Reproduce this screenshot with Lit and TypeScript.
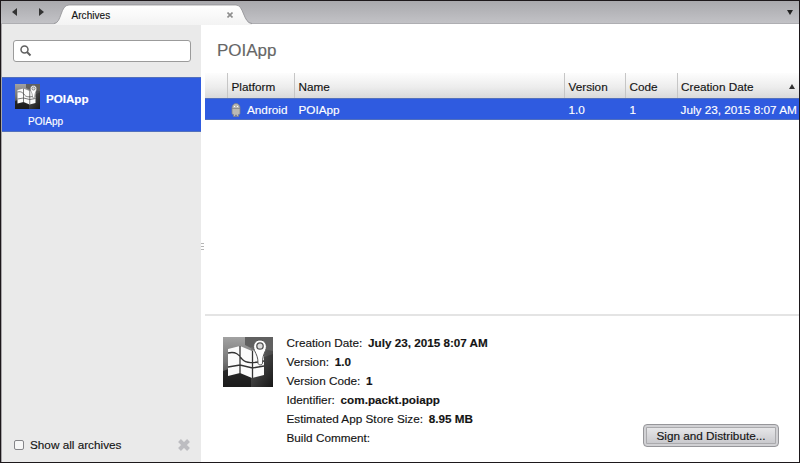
import { LitElement, html, css } from "lit";
import { customElement, property } from "lit/decorators.js";

@customElement("map-icon")
class MapIcon extends LitElement {
  @property({ type: Number }) size = 50;
  static styles = css`
    :host { display: block; flex: none; }
    svg { display: block; }
  `;
  render() {
    return html`<svg width=${this.size} height=${this.size} viewBox="0 0 50 50">
      <defs>
        <linearGradient id="g" x1="0" y1="0" x2="0" y2="1">
          <stop offset="0" stop-color="#a2a2a2" /><stop offset=".5" stop-color="#747474" />
          <stop offset="1" stop-color="#2b2b2b" />
        </linearGradient>
        <linearGradient id="d" x1="0" y1="0" x2="1" y2="1">
          <stop offset="0" stop-color="#777" /><stop offset="1" stop-color="#151515" />
        </linearGradient>
      </defs>
      <rect width="50" height="50" fill="url(#g)" />
      <path d="M22 0H50V22L22 8Z" fill="#606060" />
      <path d="M0 34L50 17V50H0Z" fill="#171717" opacity=".75" />
      <path d="M28 10L50 14V50H28Z" fill="url(#d)" opacity=".7" />
      <path d="M5 12L17 9L29 14L41 11V38L29 41L17 36L5 39Z" fill="#fbfbfb" />
      <path d="M17 9V37M29.500 14V41M5 16C13 14 16 18 19 22C23 27 31 26 41 24M5 30L17 28L29.500 31L41 29" fill="none" stroke="#333" stroke-width="1.300" />
      <path d="M35 26C35 20 33.500 18 31.500 13.500C29 8 32 3 37 3S45 8 42.500 13.500C40.500 18 39.500 20 39.500 26C39.500 28.500 35 28.500 35 26Z" fill="#fff" stroke="#555" stroke-width="1" />
      <circle cx="37" cy="9" r="3.200" fill="#ddd" stroke="#555" stroke-width="1.300" />
    </svg>`;
  }
}

@customElement("app-root")
class AppRoot extends LitElement {
  static styles = css`
    * { box-sizing: border-box; }
    :host {
      display: flex; flex-direction: column; box-sizing: border-box; width: 800px; height: 463px; overflow: hidden;
      border: 1px solid #1d181b; background: #fff; color: #141414;
      font: 11.75px/19px "Liberation Sans", Arial, sans-serif; white-space: nowrap;
      -webkit-text-stroke: .15px currentColor;
    }
    svg { display: block; flex: none; }
    .tabs {
      height: 23px; flex: none; display: flex; align-items: center; padding: 0 6px 0 11px;
      background: linear-gradient(#a9a9ad, #c2c2c6); border-bottom: 1px solid #aeaeb2;
    }
    .next { margin-left: 22px; }
    .tab { position: relative; width: 196px; height: 23px; margin-left: 10px; align-self: flex-start; }
    .shape { position: absolute; left: 0; top: 0; }
    .label { position: relative; display: flex; align-items: center; height: 20px; padding: 0 17px 0 17.5px; margin-top: 4px; font-size: 10px; letter-spacing: .05px; }
    .label svg { margin-left: auto; }
    .fill { flex: 1; }
    .body { flex: 1; display: flex; min-height: 0; }
    .side { width: 200px; flex: none; display: flex; flex-direction: column; background: #eaeaea; border-left: 1px solid #a7a5a8; }
    .search { margin: 16px 11px 15px 11px; height: 22px; width: 178px; flex: none; background: #fff; border: 1px solid #9b9b9b; border-radius: 3px; padding: 4px 6px; }
    .item { height: 55px; flex: none; background: #2f5be0; color: #fff; border-top: 1px solid #5270bd; border-bottom: 1px solid #5270bd; }
    .top { display: flex; height: 37px; padding: 6px 0 0 13px; }
    .top b { margin: 5px 0 0 6px; font-size: 11.6px; }
    .sub { display: block; font-size: 10px; line-height: 14px; padding-left: 26px; }
    .foot { margin-top: auto; height: 35px; display: flex; align-items: center; padding: 0 10px 0 12px; }
    .box { width: 10px; height: 10px; border: 1px solid #858589; border-radius: 2px; background: #f7f7f7; margin-right: 6px; }
    .foot svg { margin-left: auto; }
    .grip { width: 4px; flex: none; display: flex; flex-direction: column; justify-content: center; padding-top: 7px; }
    .grip i { display: block; width: 3px; height: 1px; background: #b5b5b5; margin: 1px 0; }
    .main { flex: 1; min-width: 0; display: flex; flex-direction: column; }
    h1 { margin: 0; height: 49px; padding: 15px 0 0 12px; font-size: 17px; line-height: 24px; font-weight: 400; color: #666; }
    .row { display: grid; grid-template-columns: 22px 67px 270px 61px 52px 1fr; flex: none; }
    .head { height: 25px; background: linear-gradient(#fdfdfd, #ededed 55%, #dadada); }
    .head > span + span { border-left: 1px solid #c6c6c6; }
    .row > span { padding-left: 3.5px; line-height: 27px; min-width: 0; }
    .row > .last { display: flex; align-items: center; justify-content: space-between; padding: 0 4px 0 3px; }
    .sel { height: 22px; background: #2f5be0; color: #fff; border-top: 1px solid #5270bd; border-bottom: 1px solid #5270bd; }
    .sel > span { line-height: 21px; padding-left: 4.5px; }
    .sel > .plat { display: flex; align-items: center; gap: 6px; padding-left: 4px; }
    .sel > .date { padding-left: 3.5px; }
    .details { margin-top: auto; height: 148px; flex: none; display: flex; border-top: 2px solid #e4e4e4; padding: 21px 20px 0 18px; }
    .info { margin: -4px 0 0 13.5px; }
    .info b { margin-left: 2.5px; font-size: 11.7px; }
    button {
      align-self: flex-end; margin: 0 0 15px auto; width: 136px; height: 23px; padding: 0; border: 1px solid #96969a;
      border-radius: 4px; box-shadow: inset 0 0 0 2px #d1d1d4, inset 0 0 0 3px #aaaaad;
      background: linear-gradient(#ececee, #c4c4c8); font: 11.75px "Liberation Sans", Arial, sans-serif; color: #141414;
    }
  `;
  fields = [
    ["Creation Date:", "July 23, 2015 8:07 AM"], ["Version:", "1.0"], ["Version Code:", "1"],
    ["Identifier:", "com.packt.poiapp"], ["Estimated App Store Size:", "8.95 MB"], ["Build Comment:", ""],
  ];
  render() {
    return html`
      <div class="tabs">
        <svg width="5" height="8"><path d="M5 0V8L0 4Z" fill="#333" /></svg>
        <svg class="next" width="5" height="8"><path d="M0 0V8L5 4Z" fill="#333" /></svg>
        <div class="tab">
          <svg class="shape" width="200" height="24">
            <defs><linearGradient id="t" x1="0" y1="0" x2="0" y2="1"><stop offset="0" stop-color="#fff" /><stop offset="1" stop-color="#f3f3f3" /></linearGradient></defs>
            <path d="M0 23C8 22 6 4 15 4H182C190 4 189 22 198 23V24H0Z" fill="url(#t)" />
            <path d="M0 22.500C8 22 6 4 15 4H182C190 4 189 22 198 22.500" fill="none" stroke="#8f8f93" stroke-width=".8" />
          </svg>
          <div class="label"><span>Archives</span><svg width="6" height="6"><path d="M.5 .5L5.500 5.500M5.500 .5L.5 5.500" stroke="#8e8e8e" stroke-width="1.600" /></svg></div>
        </div>
        <span class="fill"></span>
        <svg width="6" height="5"><path d="M0 0H6L3 5Z" fill="#222" /></svg>
      </div>
      <div class="body">
        <div class="side">
          <div class="search"><svg width="12" height="12"><circle cx="4.500" cy="4.500" r="3.500" fill="none" stroke="#606060" stroke-width="1.500" /><path d="M7 7L10.500 10.500" stroke="#606060" stroke-width="2" /></svg></div>
          <div class="item">
            <div class="top"><map-icon .size=${25}></map-icon><b>POIApp</b></div>
            <span class="sub">POIApp</span>
          </div>
          <div class="foot"><span class="box"></span>Show all archives
            <svg width="14" height="14"><path d="M2.500 2.500L11.500 11.500M11.500 2.500L2.500 11.500" stroke="#bdbdc1" stroke-width="4" /></svg>
          </div>
        </div>
        <div class="grip"><i></i><i></i><i></i></div>
        <div class="main">
          <h1>POIApp</h1>
          <div class="row head">
            <span></span><span>Platform</span><span>Name</span><span>Version</span><span>Code</span>
            <span class="last">Creation Date<svg width="6" height="5"><path d="M0 5H6L3 0Z" fill="#333" /></svg></span>
          </div>
          <div class="row sel">
            <span></span>
            <span class="plat"><svg width="10" height="14"><path d="M1 5C1 -1 9 -1 9 5V10.500Q9 11.500 7.500 11.500V13.500H5.500V12H4.500V13.500H2.500V11.500Q1 11.500 1 10.500Z" fill="#b9b9b4" stroke="#7d8088" stroke-width=".8" /><path d="M1 5.500H9" stroke="#858585" stroke-width=".8" /><path d="M3 3H4V4H3ZM6 3H7V4H6Z" fill="#fff" /></svg>Android</span>
            <span>POIApp</span><span>1.0</span><span>1</span><span class="date">July 23, 2015 8:07 AM</span>
          </div>
          <div class="details">
            <map-icon .size=${50}></map-icon>
            <div class="info">${this.fields.map(([k, v]) => html`<div>${k} <b>${v}</b></div>`)}</div>
            <button>Sign and Distribute...</button>
          </div>
        </div>
      </div>`;
  }
}
